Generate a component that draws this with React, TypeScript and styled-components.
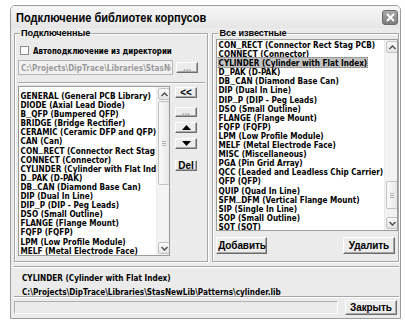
import React from 'react';
import styled, { createGlobalStyle } from 'styled-components';

// the dialog font is narrow and tall (scaled-down Windows bold), so text blocks
// are drawn in DejaVu Sans Bold and squeezed horizontally
const SQUEEZE = 0.77;

const GlobalStyle = createGlobalStyle`
  html, body { margin: 0; padding: 0; background: #fff; }
  body { font-family: "Liberation Sans", Arial, sans-serif; color: #000; }
  * { box-sizing: border-box; }
`;

const Window = styled.div`
  margin: 5px 0 0 10px;
  width: 391px;
  height: 314px;
  background: #ebebeb;
  border: 1px solid #9c9c9c;
  border-radius: 5px 5px 0 0;
  display: flex;
  flex-direction: column;
  overflow: hidden;
`;

const TitleBar = styled.div`
  flex: none;
  height: 22px;
  display: flex;
  align-items: center;
  justify-content: space-between;
  padding: 1px 2px 0 5px;
  background: linear-gradient(#f6f6f6, #e6e6e6);
`;

const Title = styled.div`
  width: 220px;
  font-size: 13px;
  font-weight: 700;
  white-space: nowrap;
  transform: scaleX(0.85);
  transform-origin: left center;
`;

const CloseBox = styled.div`
  width: 16px;
  height: 15px;
  border-radius: 3px;
  background: linear-gradient(#a9a9a9, #7c7c7c);
  border: 1px solid #6a6a6a;
  display: flex;
  align-items: center;
  justify-content: center;
`;

const Body = styled.div`
  flex: 1;
  min-height: 0;
  display: flex;
  flex-direction: column;
  padding: 0 1px 5px 3px;
`;

const Groups = styled.div`
  flex: none;
  display: flex;
  gap: 4px;
`;

const Group = styled.fieldset<{ $w: number }>`
  width: ${p => p.$w}px;
  min-width: 0;
  min-inline-size: 0;
  height: 234px;
  margin: 0;
  padding: 0 2px 0 3px;
  border: 1px solid #a6a6a6;
  box-shadow: inset 1px 1px 0 #fff, 1px 1px 0 #fff;
  display: flex;
  flex-direction: column;
  overflow: hidden;
`;

const Legend = styled.legend`
  font-size: 9.2px;
  font-weight: 700;
  line-height: 11px;
  padding: 0 1px;
  margin-left: 2px;
  letter-spacing: -0.1px;
`;

const Squeezed = styled.div<{ $w: number }>`
  width: ${p => p.$w / SQUEEZE}px;
  transform: scaleX(${SQUEEZE});
  transform-origin: left top;
  font-family: "DejaVu Sans", Verdana, sans-serif;
  font-weight: 700;
  font-size: 9.5px;
  white-space: nowrap;
`;

// DejaVu's underscore is a hairline; Arial bold gives the solid bar of the original
const Under = styled.span`
  position: relative;
  top: -1.5px;
  font-family: "Liberation Sans", Arial, sans-serif;
  font-size: 12px;
  color: #000;
`;

const Clip = styled.div<{ $w: number }>`
  width: ${p => p.$w}px;
  overflow: hidden;
`;

const CheckRow = styled.div`
  margin-top: 6px;
  height: 11px;
  display: flex;
  align-items: center;
  gap: 4px;
  padding-left: 2px;
  line-height: 11px;
`;

const CheckBox = styled.span`
  flex: none;
  width: 9px;
  height: 9px;
  background: #fff;
  border: 1px solid #8c8c8c;
`;

const PathRow = styled.div`
  margin-top: 4px;
  height: 15px;
  display: flex;
  align-items: center;
  gap: 3px;
`;

const PathField = styled.div`
  flex: none;
  width: 155px;
  height: 15px;
  background: #f2f2f2;
  border: 1px solid #b4b4b4;
  color: #9a9a9a;
  line-height: 13px;
  padding-left: 2px;
  overflow: hidden;
`;

const Separator = styled.div`
  margin-top: 7px;
  height: 2px;
  border-top: 1px solid #a6a6a6;
  border-bottom: 1px solid #fff;
`;

const ListRow = styled.div`
  margin-top: 2px;
  display: flex;
  gap: 5px;
`;

const ListBox = styled.div<{ $w: number; $h: number }>`
  flex: none;
  width: ${p => p.$w}px;
  height: ${p => p.$h}px;
  background: #fff;
  border: 1px solid #9a9a9a;
  display: flex;
  overflow: hidden;
`;

const Items = styled.div`
  flex: 1;
  min-width: 0;
  overflow: hidden;
`;

const Item = styled.div`
  height: 9.1px;
  line-height: 9.1px;
  padding-left: 1px;
`;

const ItemText = styled.span<{ $sel?: boolean }>`
  padding: 0 1px;
  background: ${p => (p.$sel ? '#c2c2c2' : 'transparent')};
  outline: ${p => (p.$sel ? '1px dotted #707070' : 'none')};
  outline-offset: -1px;
`;

const ScrollBar = styled.div`
  flex: none;
  width: 13px;
  background: #f3f3f3;
  border-left: 1px solid #ececec;
  display: flex;
  flex-direction: column;
  padding: 1px 0;
`;

const ScrollBtn = styled.div`
  width: 12px;
  height: 12px;
  margin-left: 1px;
  border: 1px solid #c2c2c2;
  border-radius: 2px;
  background: linear-gradient(#fafafa, #e4e4e4);
  display: flex;
  align-items: center;
  justify-content: center;
`;

const Track = styled.div<{ $before: number; $thumb: number }>`
  flex: 1;
  display: flex;
  flex-direction: column;
  padding-top: ${p => p.$before}px;
  > div {
    height: ${p => p.$thumb}px;
  }
`;

const Thumb = styled.div`
  width: 12px;
  margin-left: 1px;
  border: 1px solid #c2c2c2;
  border-radius: 2px;
  background: linear-gradient(90deg, #fafafa, #e6e6e6);
  display: flex;
  align-items: center;
  justify-content: center;
`;

const Grip = styled.span`
  width: 4px;
  height: 5px;
  border-top: 1px solid #b0b0b0;
  border-bottom: 1px solid #b0b0b0;
  position: relative;
  &::after {
    content: '';
    position: absolute;
    left: 0;
    right: 0;
    top: 1px;
    border-top: 1px solid #b0b0b0;
  }
`;

const SideColumn = styled.div`
  flex: none;
  width: 22px;
  display: flex;
  flex-direction: column;
  padding-top: 1px;
`;

const Button = styled.button<{ $w?: number; $h?: number; $mt?: number; $disabled?: boolean }>`
  flex: none;
  width: ${p => (p.$w ? `${p.$w}px` : '100%')};
  height: ${p => p.$h ?? 11}px;
  margin: ${p => p.$mt ?? 0}px 0 0 0;
  padding: 0;
  background: #ececec;
  border: 1px solid;
  border-color: #fff #6c6c6c #6c6c6c #fff;
  box-shadow: inset -1px -1px 0 #a8a8a8;
  font-family: "Liberation Sans", Arial, sans-serif;
  font-size: 10px;
  font-weight: 700;
  letter-spacing: -0.1px;
  color: ${p => (p.$disabled ? '#a0a0a0' : '#000')};
  display: flex;
  align-items: center;
  justify-content: center;
  line-height: 1;
`;

const RightButtons = styled.div`
  margin-top: 6px;
  display: flex;
  justify-content: space-between;
  padding: 0 1px 0 0;
`;

const Status = styled.div`
  flex: none;
  margin-top: 4px;
  height: 31px;
  border-top: 1px solid #a6a6a6;
  border-bottom: 1px solid #a6a6a6;
  box-shadow: inset 0 1px 0 #fff, 0 1px 0 #fff;
  padding: 4px 0 0 8px;
`;

const StatusLine = styled.div`
  height: 14px;
  line-height: 14px;
`;

const Footer = styled.div`
  flex: none;
  margin-top: 3px;
  display: flex;
  align-items: center;
  gap: 7px;
`;

const FooterField = styled.div`
  width: 324px;
  height: 13px;
  border: 1px solid #b0b0b0;
  border-right-color: #fff;
  border-bottom-color: #fff;
`;

const Chevron = ({ up }: { up?: boolean }) => (
  <svg width="7" height="5" viewBox="0 0 7 5">
    <path
      d={up ? 'M0.5 4 L3.5 1 L6.5 4' : 'M0.5 1 L3.5 4 L6.5 1'}
      fill="none"
      stroke="#4d4d4d"
      strokeWidth="1.4"
    />
  </svg>
);

const Triangle = ({ up }: { up?: boolean }) => (
  <svg width="9" height="5" viewBox="0 0 9 5">
    <path d={up ? 'M0 5 L4.5 0 L9 5 Z' : 'M0 0 L4.5 5 L9 0 Z'} fill="#000" />
  </svg>
);

const withUnders = (s: string) =>
  s.split('_').map((part, i) => (
    <React.Fragment key={i}>
      {i > 0 && <Under>_</Under>}
      {part}
    </React.Fragment>
  ));

const leftItems = [
  'GENERAL (General PCB Library)',
  'DIODE (Axial Lead Diode)',
  'B_QFP (Bumpered QFP)',
  'BRIDGE (Bridge Rectifier)',
  'CERAMIC (Ceramic DFP and QFP)',
  'CAN (Can)',
  'CON_RECT (Connector Rect Stag PCB)',
  'CONNECT (Connector)',
  'CYLINDER (Cylinder with Flat Index)',
  'D_PAK (D-PAK)',
  'DB_CAN (Diamond Base Can)',
  'DIP (Dual In Line)',
  'DIP_P (DIP - Peg Leads)',
  'DSO (Small Outline)',
  'FLANGE (Flange Mount)',
  'FQFP (FQFP)',
  'LPM (Low Profile Module)',
  'MELF (Metal Electrode Face)',
  'MISC (Miscellaneous)',
];

const rightItems = [
  'CON_RECT (Connector Rect Stag PCB)',
  'CONNECT (Connector)',
  'CYLINDER (Cylinder with Flat Index)',
  'D_PAK (D-PAK)',
  'DB_CAN (Diamond Base Can)',
  'DIP (Dual In Line)',
  'DIP_P (DIP - Peg Leads)',
  'DSO (Small Outline)',
  'FLANGE (Flange Mount)',
  'FQFP (FQFP)',
  'LPM (Low Profile Module)',
  'MELF (Metal Electrode Face)',
  'MISC (Miscellaneous)',
  'PGA (Pin Grid Array)',
  'QCC (Leaded and Leadless Chip Carrier)',
  'QFP (QFP)',
  'QUIP (Quad In Line)',
  'SFM_DFM (Vertical Flange Mount)',
  'SIP (Single In Line)',
  'SOP (Small Outline)',
  'SOT (SOT)',
];

type ListProps = {
  items: string[];
  w: number;
  h: number;
  top: number;
  thumbAt: number;
  thumb: number;
  selected?: string;
};

const PackageList = ({ items, w, h, top, thumbAt, thumb, selected }: ListProps) => (
  <ListBox $w={w} $h={h}>
    <Items>
      <Squeezed $w={w - 16} style={{ paddingTop: top }}>
        {items.map(it => (
          <Item key={it}>
            <ItemText $sel={it === selected}>{withUnders(it)}</ItemText>
          </Item>
        ))}
      </Squeezed>
    </Items>
    <ScrollBar>
      <ScrollBtn>
        <Chevron up />
      </ScrollBtn>
      <Track $before={thumbAt} $thumb={thumb}>
        <Thumb>
          <Grip />
        </Thumb>
      </Track>
      <ScrollBtn>
        <Chevron />
      </ScrollBtn>
    </ScrollBar>
  </ListBox>
);

export default function App() {
  return (
    <>
      <GlobalStyle />
      <Window>
        <TitleBar>
          <Title>Подключение библиотек корпусов</Title>
          <CloseBox>
            <svg width="9" height="9" viewBox="0 0 9 9">
              <path d="M1 1 L8 8 M8 1 L1 8" stroke="#fff" strokeWidth="1.8" />
            </svg>
          </CloseBox>
        </TitleBar>
        <Body>
          <Groups>
            <Group $w={195}>
              <Legend>Подключенные</Legend>
              <CheckRow>
                <CheckBox />
                <Clip $w={160}>
                  <Squeezed $w={160} style={{ fontSize: 9.2 }}>
                    Автоподключение из директории
                  </Squeezed>
                </Clip>
              </CheckRow>
              <PathRow>
                <PathField>
                  <Clip $w={150}>
                    <Squeezed $w={150}>C:\Projects\DipTrace\Libraries\StasNewLib\Patterns</Squeezed>
                  </Clip>
                </PathField>
                <Button $w={22} $h={11} $disabled>
                  ...
                </Button>
              </PathRow>
              <Separator />
              <ListRow>
                <PackageList items={leftItems} w={152} h={170} top={4} thumbAt={1} thumb={84} />
                <SideColumn>
                  <Button $h={11}>&lt;&lt;</Button>
                  <Button $h={10} $mt={9} $disabled>
                    ...
                  </Button>
                  <Button $h={11} $mt={5}>
                    <Triangle up />
                  </Button>
                  <Button $h={11} $mt={5}>
                    <Triangle />
                  </Button>
                  <Button $h={11} $mt={11}>
                    Del
                  </Button>
                </SideColumn>
              </ListRow>
            </Group>
            <Group $w={187}>
              <Legend>Все известные</Legend>
              <PackageList
                items={rightItems}
                w={182}
                h={192}
                top={0}
                thumbAt={128}
                thumb={28}
                selected="CYLINDER (Cylinder with Flat Index)"
              />
              <RightButtons>
                <Button $w={51} $h={17}>
                  Добавить
                </Button>
                <Button $w={52} $h={17}>
                  Удалить
                </Button>
              </RightButtons>
            </Group>
          </Groups>
          <Status>
            <Clip $w={370}>
              <Squeezed $w={370}>
                <StatusLine>CYLINDER (Cylinder with Flat Index)</StatusLine>
                <StatusLine>C:\Projects\DipTrace\Libraries\StasNewLib\Patterns\cylinder.lib</StatusLine>
              </Squeezed>
            </Clip>
          </Status>
          <Footer>
            <FooterField />
            <Button $w={52} $h={15}>
              Закрыть
            </Button>
          </Footer>
        </Body>
      </Window>
    </>
  );
}
